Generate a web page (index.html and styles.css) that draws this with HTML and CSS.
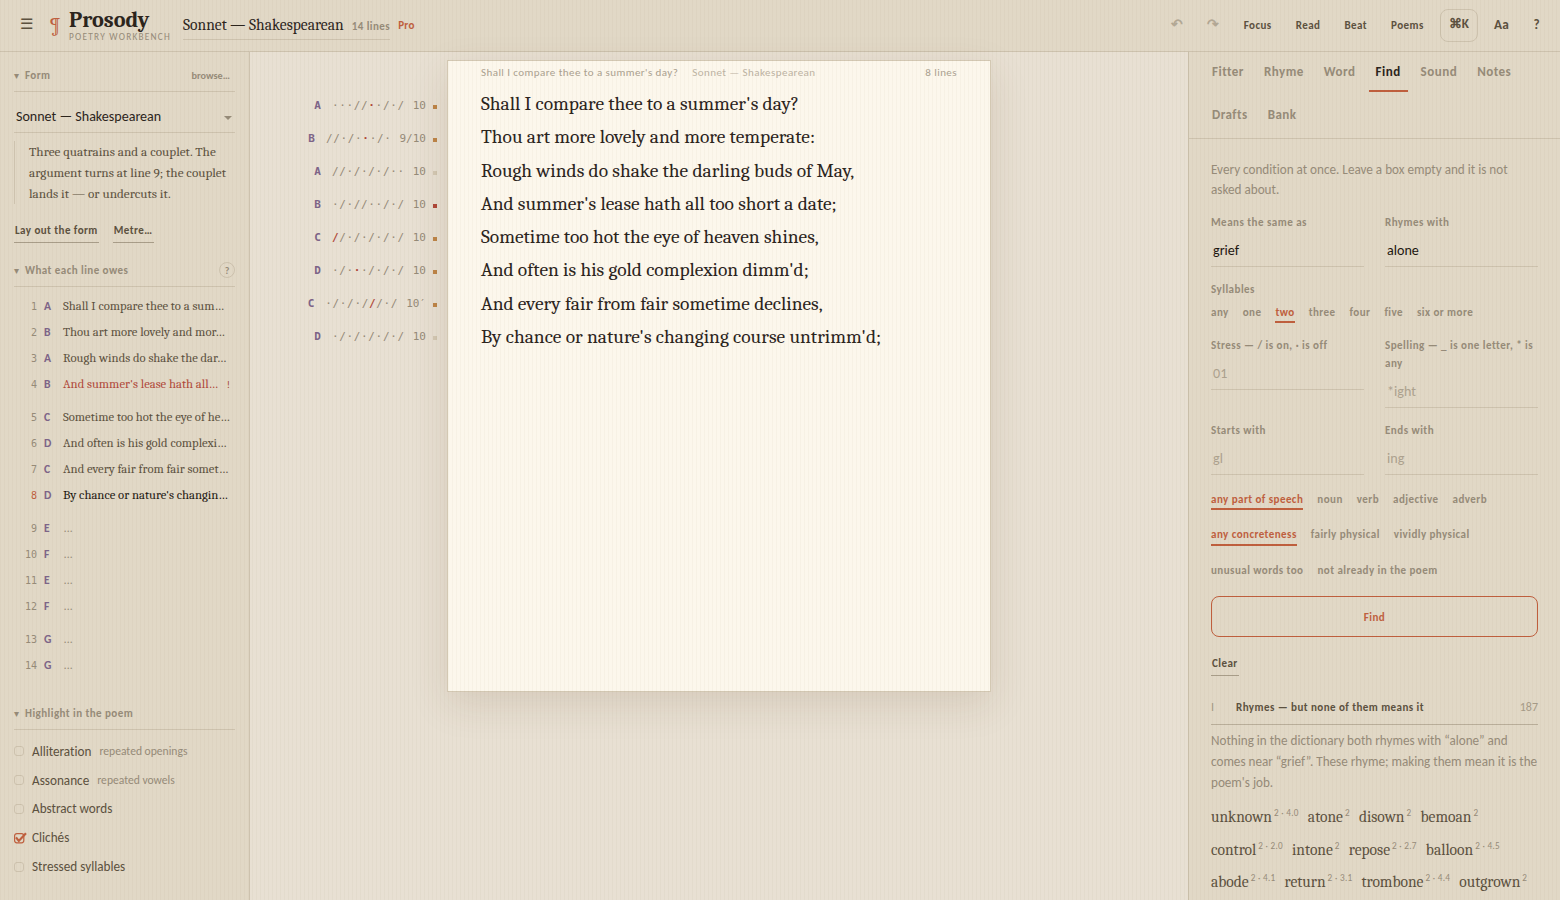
FILE: index.html
```html
<!DOCTYPE html>
<html lang="en">
<head>
    <meta charset="UTF-8">
    <meta name="viewport" content="width=device-width, initial-scale=1.0">
    <title>Prosody</title>
    <link rel="stylesheet" href="styles.css">
</head>
<body>
    <header class="topbar">
        <button class="menu">☰</button>
        <span class="mark">¶</span>
        <div class="brand">
            <h1>Prosody</h1>
            <span>POETRY WORKBENCH</span>
        </div>
        <div class="doc">
            <span class="doc-title">Sonnet — Shakespearean</span>
            <span class="doc-lines">14 lines</span>
        </div>
        <span class="pro">Pro</span>
        <nav class="tools">
            <button class="arrow">↶</button>
            <button class="arrow">↷</button>
            <button>Focus</button>
            <button>Read</button>
            <button>Beat</button>
            <button>Poems</button>
            <button class="key">⌘K</button>
            <button class="big aa">Aa</button>
            <button class="big help">?</button>
        </nav>
    </header>

    <div class="workspace">
        <aside class="left">
            <div class="section-head">
                <span class="caret">▾</span>
                <h2>Form</h2>
                <button class="browse">browse…</button>
            </div>
            <div class="select">Sonnet — Shakespearean</div>
            <p class="about">Three quatrains and a couplet. The argument turns at line 9; the couplet lands it — or undercuts it.</p>
            <div class="actions">
                <button class="link">Lay out the form</button>
                <button class="link">Metre…</button>
            </div>

            <div class="section-head">
                <span class="caret">▾</span>
                <h2>What each line owes</h2>
                <button class="hint">?</button>
            </div>
            <div class="owes">
                <div class="stanza">
                    <div class="owe"><i>1</i><b>A</b><span>Shall I compare thee to a sum…</span></div>
                    <div class="owe"><i>2</i><b>B</b><span>Thou art more lovely and mor…</span></div>
                    <div class="owe"><i>3</i><b>A</b><span>Rough winds do shake the dar…</span></div>
                    <div class="owe broken"><i>4</i><b>B</b><span>And summer's lease hath all…</span><em>!</em></div>
                </div>
                <div class="stanza">
                    <div class="owe"><i>5</i><b>C</b><span>Sometime too hot the eye of he…</span></div>
                    <div class="owe"><i>6</i><b>D</b><span>And often is his gold complexi…</span></div>
                    <div class="owe"><i>7</i><b>C</b><span>And every fair from fair somet…</span></div>
                    <div class="owe current"><i>8</i><b>D</b><span>By chance or nature's changin…</span></div>
                </div>
                <div class="stanza">
                    <div class="owe empty"><i>9</i><b>E</b><span>…</span></div>
                    <div class="owe empty"><i>10</i><b>F</b><span>…</span></div>
                    <div class="owe empty"><i>11</i><b>E</b><span>…</span></div>
                    <div class="owe empty"><i>12</i><b>F</b><span>…</span></div>
                </div>
                <div class="stanza">
                    <div class="owe empty"><i>13</i><b>G</b><span>…</span></div>
                    <div class="owe empty"><i>14</i><b>G</b><span>…</span></div>
                </div>
            </div>

            <div class="section-head">
                <span class="caret">▾</span>
                <h2>Highlight in the poem</h2>
            </div>
            <div class="checks">
                <div class="check"><span class="box"></span>Alliteration <small>repeated openings</small></div>
                <div class="check"><span class="box"></span>Assonance <small>repeated vowels</small></div>
                <div class="check"><span class="box"></span>Abstract words</div>
                <div class="check">
                    <svg class="tick" viewBox="0 0 13 12" width="13" height="12">
                        <rect x="0.6" y="1.6" width="9.2" height="9.2" rx="2.2" fill="none" stroke="currentColor" stroke-width="1.2"/>
                        <path d="M2 5.4 L4.8 8.9 L12 1.2" fill="none" stroke="currentColor" stroke-width="2.2"/>
                    </svg>Clichés
                </div>
                <div class="check"><span class="box"></span>Stressed syllables</div>
            </div>
        </aside>

        <main class="desk">
            <div class="gutter">
                <div class="scan"><b>A</b><span>···//<u>·</u>·/·/</span><i>10</i><s class="warn"></s></div>
                <div class="scan"><b>B</b><span>//·/·<u>·</u>·/·</span><i>9/10</i><s class="warn"></s></div>
                <div class="scan"><b>A</b><span>//·/·/·/··</span><i>10</i><s></s></div>
                <div class="scan"><b>B</b><span>·/·//··/·/</span><i>10</i><s class="bad"></s></div>
                <div class="scan"><b>C</b><span><u>/</u>/·/·/·/·/</span><i>10</i><s class="warn"></s></div>
                <div class="scan"><b>D</b><span>·/·<u>·</u>·/·/·/</span><i>10</i><s class="warn"></s></div>
                <div class="scan"><b>C</b><span>·/·/·/<u>/</u>/·/</span><i>10′</i><s class="warn"></s></div>
                <div class="scan"><b>D</b><span>·/·/·/·/·/</span><i>10</i><s></s></div>
            </div>
            <article class="sheet">
                <div class="running">
                    <span>Shall I compare thee to a summer's day?</span>
                    <span class="kind">Sonnet — Shakespearean</span>
                    <span class="count">8 lines</span>
                </div>
                <div class="poem">
                    <p>Shall I compare thee to a summer's day?</p>
                    <p>Thou art more lovely and more temperate:</p>
                    <p>Rough winds do shake the darling buds of May,</p>
                    <p>And summer's lease hath all too short a date;</p>
                    <p>Sometime too hot the eye of heaven shines,</p>
                    <p>And often is his gold complexion dimm'd;</p>
                    <p>And every fair from fair sometime declines,</p>
                    <p>By chance or nature's changing course untrimm'd;</p>
                </div>
            </article>
        </main>

        <aside class="right">
            <nav class="tabs">
                <button>Fitter</button>
                <button>Rhyme</button>
                <button>Word</button>
                <button class="active">Find</button>
                <button>Sound</button>
                <button>Notes</button>
                <button>Drafts</button>
                <button>Bank</button>
            </nav>
            <div class="find">
                <p class="intro">Every condition at once. Leave a box empty and it is not asked about.</p>
                <div class="fields">
                    <label>Means the same as<input type="text" value="grief"></label>
                    <label>Rhymes with<input type="text" value="alone"></label>
                </div>
                <div class="caption">Syllables</div>
                <div class="options syllables">
                    <button>any</button>
                    <button>one</button>
                    <button class="on">two</button>
                    <button>three</button>
                    <button>four</button>
                    <button>five</button>
                    <button>six or more</button>
                </div>
                <div class="fields">
                    <label>Stress — / is on, · is off<input type="text" placeholder="01"></label>
                    <label>Spelling — _ is one letter, * is any<input type="text" placeholder="*ight"></label>
                    <label>Starts with<input type="text" placeholder="gl"></label>
                    <label>Ends with<input type="text" placeholder="ing"></label>
                </div>
                <div class="options">
                    <button class="on">any part of speech</button>
                    <button>noun</button>
                    <button>verb</button>
                    <button>adjective</button>
                    <button>adverb</button>
                </div>
                <div class="options">
                    <button class="on">any concreteness</button>
                    <button>fairly physical</button>
                    <button>vividly physical</button>
                </div>
                <div class="options">
                    <button>unusual words too</button>
                    <button>not already in the poem</button>
                </div>
                <button class="submit">Find</button>
                <button class="link">Clear</button>

                <div class="result-head">
                    <span class="num">I</span>
                    <h3>Rhymes — but none of them means it</h3>
                    <span class="total">187</span>
                </div>
                <p class="note">Nothing in the dictionary both rhymes with “alone” and comes near “grief”. These rhyme; making them mean it is the poem's job.</p>
                <div class="words">
                    <span>unknown<sup>2 · 4.0</sup></span>
                    <span>atone<sup>2</sup></span>
                    <span>disown<sup>2</sup></span>
                    <span>bemoan<sup>2</sup></span>
                    <span>control<sup>2 · 2.0</sup></span>
                    <span>intone<sup>2</sup></span>
                    <span>repose<sup>2 · 2.7</sup></span>
                    <span>balloon<sup>2 · 4.5</sup></span>
                    <span>abode<sup>2 · 4.1</sup></span>
                    <span>return<sup>2 · 3.1</sup></span>
                    <span>trombone<sup>2 · 4.4</sup></span>
                    <span>outgrown<sup>2</sup></span>
                </div>
            </div>
        </aside>
    </div>
</body>
</html>
```
FILE: styles.css
```css
:root {
    --ink: #2b241c;
    --soft: #5c5140;
    --faint: #968b79;
    --line: #cdc2ae;
    --accent: #bf5f3e;
    --rhyme: #7d6488;
    --panel: #e1d8c6;
    --serif: Cambria, Caladea, "Noto Serif", serif;
    --sans: Carlito, Calibri, Lato, sans-serif;
    --mono: "DejaVu Sans Mono", monospace;
    --tiny: 11.04px;
    --track: 0.44px;
}
* {
    box-sizing: border-box;
}
body {
    margin: 0;
    height: 100vh;
    overflow: hidden;
    font-family: var(--sans);
    font-variant-ligatures: none;
    color: var(--ink);
    background: #e8e0d3;
}
/* laid paper lines over everything */
body::after {
    content: "";
    position: fixed;
    inset: 0;
    pointer-events: none;
    background: repeating-linear-gradient(90deg, rgba(120, 95, 50, 0.035) 0 1px, transparent 1px 4px);
}
button {
    font-family: inherit;
    border: none;
    background: none;
    padding: 0;
    color: inherit;
    cursor: pointer;
}
h1, h2, h3, p {
    margin: 0;
}

/* top bar */
.topbar {
    display: flex;
    align-items: center;
    height: 52px;
    padding: 0 8px 2px 20px;
    background: var(--panel);
    border-bottom: 1px solid var(--line);
}
.menu {
    width: 12px;
    font-size: 15px;
    color: var(--soft);
    margin-top: -2px;
}
.mark {
    margin: 1px 0 0 17px;
    width: 11px;
    font-family: var(--serif);
    font-size: 20.8px;
    color: var(--accent);
}
.brand {
    width: 103px;
    margin: 2px 0 0 9px;
}
.brand h1 {
    font-family: var(--serif);
    font-size: 22.3px;
    line-height: 22px;
}
.brand span {
    display: block;
    font-size: 9.3px;
    line-height: 10px;
    letter-spacing: 1.25px;
    color: var(--faint);
    margin-top: 1px;
}
.doc {
    display: flex;
    align-items: baseline;
    gap: 8px;
    height: 29px;
    margin: 1px 0 0 11px;
    line-height: 28px;
    border-bottom: 1px solid var(--line);
}
.doc-title {
    font-family: var(--serif);
    font-size: 15.53px;
}
.doc-lines {
    font-size: var(--tiny);
    font-weight: bold;
    letter-spacing: var(--track);
    color: var(--faint);
}
.pro {
    margin: 1px 0 0 8px;
    font-size: var(--tiny);
    font-weight: bold;
    letter-spacing: 0.3px;
    color: var(--accent);
}
.tools {
    display: flex;
    align-items: center;
    margin-left: auto;
    color: var(--soft);
}
.tools button {
    padding: 0 12px;
    font-size: var(--tiny);
    font-weight: bold;
    letter-spacing: var(--track);
}
.tools .arrow {
    font-size: 14px;
    color: #b3a896;
}
.tools .key {
    width: 38px;
    height: 33px;
    margin: 2px 4px 0;
    padding: 0 0 3px;
    font-size: 13.1px;
    letter-spacing: 0;
    border: 1px solid var(--line);
    border-radius: 8px;
}
.tools .big {
    font-size: 13.3px;
}

.workspace {
    display: grid;
    grid-template-columns: 250px 1fr 372px;
    height: calc(100vh - 52px);
}

/* left panel */
.left {
    padding: 7px 14px 0;
    background: var(--panel);
    border-right: 1px solid var(--line);
}
.section-head {
    display: flex;
    align-items: center;
    height: 33px;
    color: var(--faint);
    border-bottom: 1px solid var(--line);
}
.section-head .caret {
    width: 11px;
    font-size: 10px;
}
.section-head h2 {
    font-size: var(--tiny);
    letter-spacing: var(--track);
}
.browse {
    margin-left: auto;
    padding-right: 5px;
    font-size: 10.2px;
    font-weight: bold;
}
.hint {
    width: 16px;
    height: 16px;
    margin-left: auto;
    font-size: 10px;
    font-weight: bold;
    border: 1px solid var(--line);
    border-radius: 50%;
}
.select {
    display: flex;
    align-items: center;
    justify-content: space-between;
    height: 31px;
    margin-top: 10px;
    padding: 0 3px 1px 2px;
    font-size: 14.05px;
    border-bottom: 1px solid var(--line);
}
.select::after {
    content: "";
    margin-top: 3px;
    border: 4px solid transparent;
    border-top: 4px solid var(--faint);
    border-bottom: 0;
}
.about {
    margin-top: 8px;
    padding-left: 14px;
    font-family: var(--serif);
    font-size: 13.2px;
    line-height: 21px;
    color: var(--soft);
    border-left: 1px solid var(--line);
}
.actions {
    display: flex;
    gap: 14px;
    margin: 15px 0 11px;
}
.link {
    display: block;
    height: 24px;
    padding: 0 1px 1px;
    font-size: var(--tiny);
    font-weight: bold;
    letter-spacing: var(--track);
    color: var(--soft);
    border-bottom: 1px solid #a89d89;
}
.owes {
    padding-top: 6px;
    margin-bottom: 19px;
}
.stanza {
    margin-bottom: 7px;
}
.owe {
    display: grid;
    grid-template-columns: 23px 26px 1fr auto;
    align-items: center;
    height: 26px;
    padding-right: 5px;
}
.owe i {
    font-family: var(--mono);
    font-size: 10px;
    font-style: normal;
    text-align: right;
    color: var(--faint);
}
.owe b {
    padding-left: 7px;
    font-size: 11.6px;
    color: var(--rhyme);
}
.owe span {
    white-space: nowrap;
    font-family: var(--serif);
    font-size: 12.65px;
    color: var(--soft);
}
.owe em {
    font-size: 10px;
    font-style: normal;
    color: #a8483a;
}
.owe.broken span {
    color: #b0483a;
}
.current i {
    color: var(--accent);
}
.owe.current span {
    color: #1c1610;
}
.owe.empty span {
    color: var(--faint);
}
.checks {
    padding-top: 7px;
}
.check {
    display: flex;
    align-items: center;
    height: 28.8px;
    font-size: 13.2px;
    color: var(--soft);
}
.check small {
    margin-left: 8px;
    font-size: 11.6px;
    color: var(--faint);
}
.box {
    width: 10px;
    height: 10px;
    margin-right: 8px;
    border: 1px solid var(--line);
    border-radius: 3px;
}
.tick {
    margin-right: 5px;
    color: var(--accent);
}

/* desk */
.desk {
    display: flex;
    align-items: flex-start;
    padding: 8px 0 0 50px;
}
.gutter {
    width: 137px;
    padding-top: 29px;
    margin-right: 10px;
}
.scan {
    display: flex;
    align-items: center;
    justify-content: flex-end;
    height: 33px;
    font-family: var(--mono);
    font-size: 11px;
    color: var(--faint);
}
.scan b {
    margin-right: 11px;
    color: var(--rhyme);
}
.scan span {
    letter-spacing: 0.66px;
}
.scan u {
    text-decoration: none;
    font-weight: bold;
    color: #b0483a;
}
.scan i {
    margin-left: 8px;
    font-style: normal;
}
.scan s {
    width: 4px;
    height: 4px;
    margin: 3px 0 0 7px;
    background: #d3c8b3;
}
.scan .warn {
    background: #be8548;
}
.scan .bad {
    background: #b0483a;
}
.sheet {
    width: 544px;
    height: 632px;
    padding: 0 33px;
    background: #fcf7ec;
    border: 1px solid #d3c8b3;
    box-shadow: 0 12px 36px rgba(90, 65, 30, 0.13);
}
.running {
    display: flex;
    height: 27px;
    line-height: 23px;
    font-size: var(--tiny);
    letter-spacing: 0.42px;
    color: #aba190;
}
.running .kind {
    margin-left: 14px;
    color: #bdb3a3;
}
.running .count {
    margin-left: auto;
}
.poem {
    font-family: var(--serif);
    font-size: 19.44px;
    line-height: 33.28px;
}

/* right panel */
.right {
    background: var(--panel);
    border-left: 1px solid var(--line);
}
.tabs {
    display: flex;
    flex-wrap: wrap;
    gap: 3px 6px;
    padding: 0 16px 3px;
    border-bottom: 1px solid var(--line);
}
.tabs button {
    height: 40px;
    padding: 2px 7px 0;
    font-size: 13.04px;
    font-weight: bold;
    letter-spacing: 0.48px;
    color: var(--faint);
    border-bottom: 2px solid transparent;
}
.tabs .active {
    color: var(--ink);
    border-bottom-color: var(--accent);
}
.find {
    padding: 21px 22px 0;
}
.intro {
    margin-bottom: 13px;
    font-size: 13.17px;
    line-height: 20px;
    color: var(--faint);
}
.fields {
    display: grid;
    grid-template-columns: 1fr 1fr;
    gap: 13px 21px;
    margin-bottom: 13px;
}
.fields label, .caption {
    font-size: var(--tiny);
    font-weight: bold;
    line-height: 18px;
    letter-spacing: 0.47px;
    color: var(--faint);
}
.fields input {
    display: block;
    width: 100%;
    height: 32px;
    margin-top: 4px;
    padding: 0 2px 1px;
    font-family: var(--sans);
    font-size: 14.1px;
    color: #1c1610;
    background: none;
    border: none;
    border-bottom: 1px solid var(--line);
}
.fields input::placeholder {
    color: #ada28f;
}
.options {
    display: flex;
    gap: 14px;
    margin: 14.4px 0;
}
.options.syllables {
    margin: 4px 0 13px;
}
.options button {
    height: 21px;
    font-size: var(--tiny);
    font-weight: bold;
    letter-spacing: var(--track);
    color: var(--faint);
    border-bottom: 2px solid transparent;
}
.options .on {
    color: var(--accent);
    border-bottom-color: var(--accent);
}
.submit {
    display: block;
    width: 100%;
    height: 41px;
    margin: 15px 0;
    font-size: var(--tiny);
    font-weight: bold;
    letter-spacing: var(--track);
    color: var(--accent);
    border: 1px solid var(--accent);
    border-radius: 8px;
}
.result-head {
    display: flex;
    align-items: center;
    height: 36px;
    margin-top: 13px;
    font-size: 12px;
    color: #a59a87;
    border-bottom: 1px solid #b9ae9a;
}
.result-head .num {
    width: 25px;
}
.result-head h3 {
    font-size: var(--tiny);
    letter-spacing: var(--track);
    color: var(--soft);
}
.result-head .total {
    margin-left: auto;
}
.note {
    margin: 5px -1px 8px 0;
    font-size: 13.15px;
    line-height: 21px;
    color: var(--faint);
}
.words {
    display: flex;
    flex-wrap: wrap;
    gap: 0 9px;
    font-family: var(--serif);
    font-size: 15.5px;
    line-height: 32.5px;
    color: var(--soft);
}
.words sup {
    margin-left: 2px;
    font-family: var(--sans);
    font-size: 9.2px;
    line-height: 0;
    letter-spacing: 0.3px;
    color: var(--faint);
}
```
